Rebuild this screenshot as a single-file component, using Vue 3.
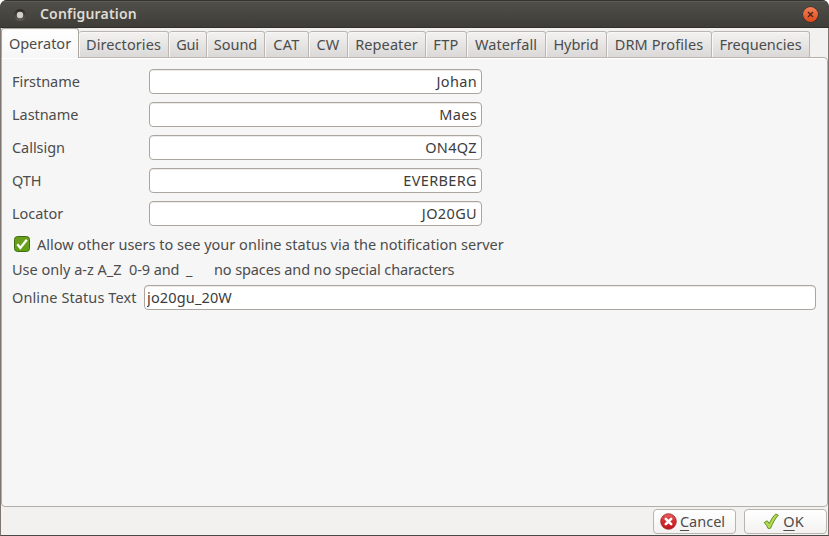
<script setup>
import { ref } from 'vue'

const tabs = [
  { label: 'Operator', width: 78, spacing: 0 },
  { label: 'Directories', width: 90, spacing: 0.08 },
  { label: 'Gui', width: 38, spacing: -0.2 },
  { label: 'Sound', width: 58, spacing: 0 },
  { label: 'CAT', width: 44, spacing: 0.4 },
  { label: 'CW', width: 39, spacing: 0.3 },
  { label: 'Repeater', width: 78, spacing: 0.08 },
  { label: 'FTP', width: 41, spacing: 0.4 },
  { label: 'Waterfall', width: 79, spacing: 0.1 },
  { label: 'Hybrid', width: 61, spacing: -0.1 },
  { label: 'DRM Profiles', width: 105, spacing: 0.1 },
  { label: 'Frequencies', width: 98, spacing: 0 }
]
const active = ref('Operator')
const fields = ref([
  { label: 'Firstname', value: 'Johan' },
  { label: 'Lastname', value: 'Maes' },
  { label: 'Callsign', value: 'ON4QZ' },
  { label: 'QTH', value: 'EVERBERG' },
  { label: 'Locator', value: 'JO20GU' }
])
const status = ref('jo20gu_20W')
</script>

<template>
  <div class="window">
    <header class="titlebar">
      <svg class="app-icon" width="14" height="14" viewBox="0 0 14 14">
        <defs>
          <linearGradient id="ring" x1="0" y1="0" x2="0" y2="1">
            <stop offset="0" stop-color="#282724" /><stop offset="1" stop-color="#625f58" />
          </linearGradient>
        </defs>
        <circle cx="7" cy="7" r="6" fill="url(#ring)" />
        <circle cx="7" cy="7" r="3.2" fill="#d3d0cb" />
      </svg>
      <h1 class="title">Configuration</h1>
      <svg class="close" width="17" height="17" viewBox="0 0 17 17">
        <defs>
          <linearGradient id="orange" x1="0" y1="0" x2="0" y2="1">
            <stop offset="0" stop-color="#f58058" /><stop offset="1" stop-color="#e04a18" />
          </linearGradient>
        </defs>
        <circle cx="8.5" cy="8.5" r="8" fill="#302b27" />
        <circle cx="8.5" cy="8.5" r="7.5" fill="url(#orange)" />
        <path d="M6 6l5 5M11 6l-5 5" stroke="#40261c" stroke-width="1.3" />
      </svg>
    </header>
    <main class="body">
      <nav class="tabs">
        <div v-for="t in tabs" :key="t.label" class="tab" :class="{ active: t.label === active }"
          :style="{ width: t.width + 'px', letterSpacing: t.spacing + 'px' }" @click="active = t.label">{{ t.label }}</div>
      </nav>
      <section class="panel">
        <div class="fields">
          <label v-for="f in fields" :key="f.label" class="field">
            <span class="name">{{ f.label }}</span>
            <input v-model="f.value" class="input right" />
          </label>
        </div>
        <label class="check">
          <svg width="16" height="16" viewBox="0 0 16 16">
            <defs>
              <linearGradient id="green" x1="0" y1="0" x2="0" y2="1">
                <stop offset="0" stop-color="#6b9d1d" /><stop offset="1" stop-color="#60a010" />
              </linearGradient>
            </defs>
            <rect x=".5" y=".5" width="15" height="15" rx="3" fill="url(#green)" stroke="#416d12" />
            <path d="M3.300 8.200l3 3.700L12.800 3.800" fill="none" stroke="#fff" stroke-width="2.3" />
          </svg>
          <span class="allow">Allow other users to see your online status via the notification server</span>
        </label>
        <p class="hint"><span class="h1">Use only a-z A_Z</span><span class="h2">0-9 and</span><span class="h3">_</span><span class="h4">no spaces and no special characters</span></p>
        <label class="status">
          <span class="status-name">Online Status Text</span>
          <input v-model="status" class="input wide" />
        </label>
      </section>
      <footer class="actions">
        <button class="button cancel">
          <svg width="17" height="17" viewBox="0 0 17 17">
            <defs>
              <linearGradient id="red" x1="0" y1="0" x2="0" y2="1">
                <stop offset="0" stop-color="#e66060" /><stop offset=".5" stop-color="#d22b30" /><stop offset="1" stop-color="#bc161d" />
              </linearGradient>
            </defs>
            <circle cx="8.5" cy="8.5" r="7.8" fill="url(#red)" stroke="#a51d20" stroke-width=".8" />
            <path d="M5.800 5.800l5.400 5.400M11.200 5.800l-5.400 5.400" stroke="#fff" stroke-width="2.6" stroke-linecap="round" />
          </svg>
          <span><u>C</u>ancel</span>
        </button>
        <button class="button ok">
          <svg width="17" height="17" viewBox="0 0 17 17">
            <path d="M1.200 9.600l3-1.800 2.100 2.700C8 6.800 10.200 3.200 12.700 1l2.600 1.200C12 5.600 9.700 10.200 7.600 15.200l-2.400.4C4.200 13.200 3 11.300 1.200 9.600z" fill="#b0db50" stroke="#62911f" stroke-width="1" stroke-linejoin="round" />
          </svg>
          <span><u>O</u>K</span>
        </button>
      </footer>
    </main>
  </div>
</template>

<style>
body { margin: 0; background: #fff; overflow: hidden; }
</style>
<style scoped>
* { box-sizing: border-box; }
.window { width: 829px; height: 536px; display: flex; flex-direction: column; background: #3c3b37; border-radius: 7px 7px 0 0; overflow: hidden; font: 14.5px/20px "Noto Sans", sans-serif; color: #4c4c4c; }
.titlebar { height: 28px; flex: none; display: flex; align-items: center; padding: 1px 10px 0 13px; border-top: 1px solid #34332f; border-bottom: 1px solid #31302c; box-shadow: inset 0 1px #5d5c56; background: linear-gradient(#504f49, #3e3d38); }
.title { margin: -2px auto 0 13px; font-size: 14px; line-height: 20px; font-weight: 600; color: #dfdbd2; letter-spacing: .18px; }
.body { flex: 1; min-height: 0; display: flex; flex-direction: column; background: #f2f1f0; border: solid #7d756f; border-width: 0 1px; border-bottom: 1px solid #4b4a46; }
.tabs { height: 30px; flex: none; display: flex; align-items: flex-end; position: relative; z-index: 1; margin-bottom: -1px; }
.tab { height: 27px; flex: none; display: flex; justify-content: center; padding-top: 2px; white-space: nowrap; border: 1px solid #bab7b2; border-left-width: 0; border-radius: 3px 3px 0 0; background: linear-gradient(#f3f2f1, #dbd9d7); box-shadow: inset 1px 1px #f8f7f6; }
.tab.active { height: 30px; padding-top: 4px; border-color: #aaa6a0; border-left-width: 1px; border-bottom: 0; background: linear-gradient(#fff, #f6f6f6); }
.panel { height: 450px; flex: none; border: 1px solid #b2afa9; border-radius: 0 4px 4px 4px; background: #f6f6f6; padding: 11px 10px 0; box-shadow: inset 0 1px #fff; }
.fields { display: flex; flex-direction: column; gap: 8px; }
.field { display: flex; align-items: flex-start; height: 25px; }
.name { width: 137px; padding-top: 2px; letter-spacing: -.05px; }
.input { height: 25px; border: 1px solid #aaa69f; border-radius: 4px; background: #fff; padding: 0 2px 1px; font: inherit; letter-spacing: .35px; color: #3c3c3c; outline: none; box-shadow: inset 0 1px #eeeae7; }
.right { width: 333px; text-align: right; padding-right: 4px; }
.check { display: flex; align-items: center; height: 20px; margin: 8px 0 0 2px; gap: 7px; }
.allow { margin-top: -1px; letter-spacing: .01px; }
.hint { margin: 5px 0 0; height: 20px; display: flex; white-space: nowrap; }
.h1 { width: 117px; }
.h2 { width: 57px; letter-spacing: -.1px; }
.h3 { width: 28px; }
.h4 { letter-spacing: -.11px; }
.status { display: flex; align-items: flex-start; margin-top: 6px; height: 25px; }
.status-name { width: 132px; padding-top: 2px; white-space: nowrap; letter-spacing: .1px; }
.wide { width: 672px; letter-spacing: .15px; }
.actions { flex: 1; display: flex; justify-content: flex-end; align-items: flex-start; gap: 8px; padding: 2px 1px 0 0; }
.button { height: 25px; display: flex; align-items: center; justify-content: center; gap: 3px; padding: 0 4px 0 0; border: 1px solid #b8b4af; border-radius: 4px; background: linear-gradient(#fff, #f3f2f1); font: inherit; color: #4c4c4c; }
.button span { margin-top: -1px; }
.button u { text-underline-offset: 3px; text-decoration-thickness: 1px; }
.cancel { width: 83px; }
.ok { width: 83px; }
</style>
